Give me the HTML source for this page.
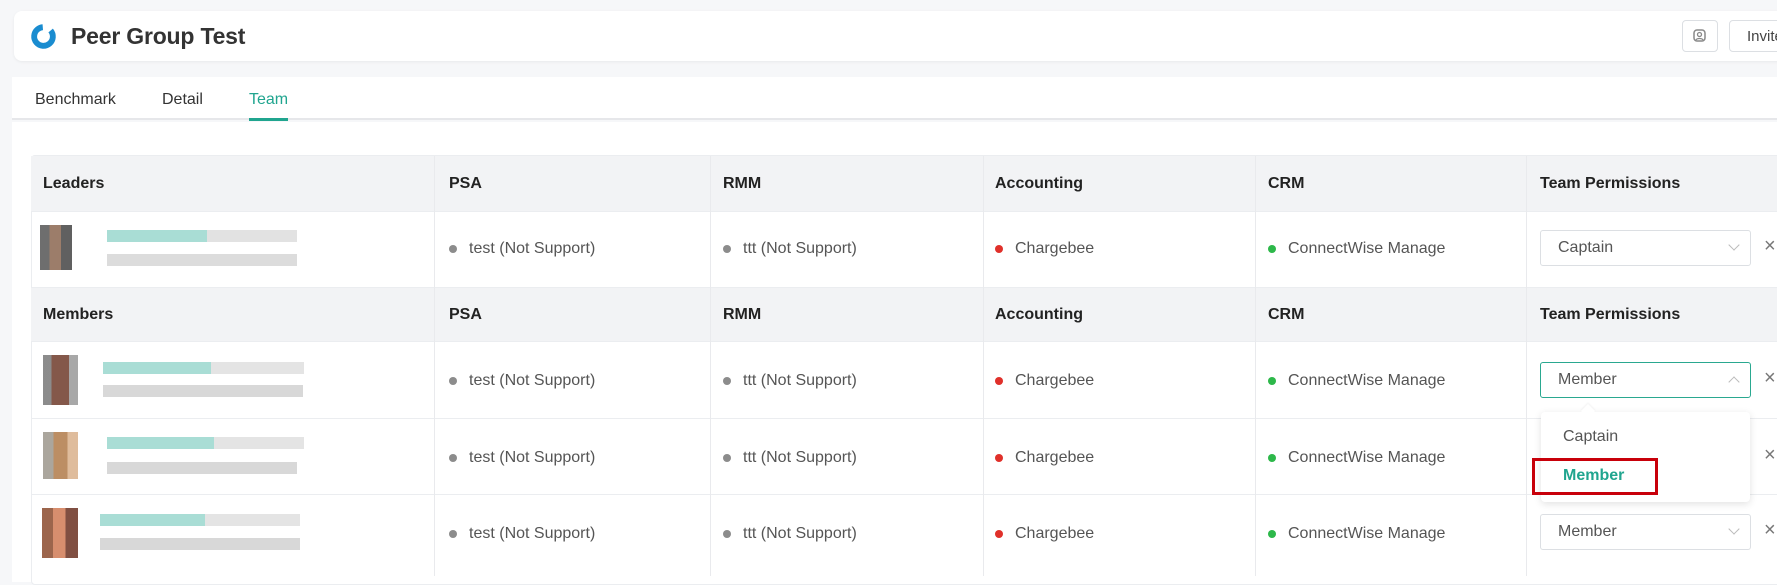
<!DOCTYPE html>
<html><head><meta charset="utf-8"><style>
*{box-sizing:border-box;margin:0;padding:0}
body{width:1777px;height:571px;overflow:hidden;background:#f6f7f9;font-family:"Liberation Sans",sans-serif;position:relative;color:#555}
.a{position:absolute}
.card{left:14px;top:11px;width:1800px;height:50px;background:#fff;border-radius:8px;box-shadow:0 1px 3px rgba(0,0,0,.06)}
.title{left:71px;top:23px;font-size:23px;color:#333;font-weight:bold;letter-spacing:-0.2px}
.tabs{left:12px;top:77px;width:1800px;height:43px;background:#fff;border-bottom:2px solid #e6e7ea}
.tab{top:91px;font-size:16px;color:#333}
.panel{left:12px;top:122px;width:1800px;height:460px;background:#fff}
.tbl{left:31px;top:155px;width:1760px;height:430px;border:1px solid #ebedf0;border-radius:4px;background:#fff}
.hd{left:31px;width:1760px;background:#f2f3f5}
.th{font-size:16px;font-weight:bold;color:#222}
.vl{width:1px;background:#e9eaed}
.hl{left:31px;width:1760px;height:1px;background:#ebedf0}
.td{font-size:16px;color:#555}
.dot{width:8px;height:8px;border-radius:50%}
.sel{left:1540px;width:211px;height:36px;border:1px solid #dcdfe3;border-radius:3px;background:#fff;font-size:16px;color:#555;padding:8px 0 0 17px}
.chev{right:12px;top:12px;width:8px;height:8px;border-right:1px solid #bbb;border-bottom:1px solid #bbb;transform:rotate(45deg)}
.x{left:1764px;font-size:20px;color:#777}
</style></head><body>
<div class="a card"></div>
<svg class="a" style="left:30px;top:23px" width="27" height="27" viewBox="0 0 24 24"><circle cx="12" cy="12" r="8.3" fill="none" stroke="#1a8cd0" stroke-width="5.2" stroke-dasharray="44 9" transform="rotate(-40 12 12)"/></svg>
<div class="a title">Peer Group Test</div>
<div class="a" style="left:1682px;top:20px;width:36px;height:32px;border:1px solid #dcdfe3;border-radius:4px;background:#fff"></div>
<svg class="a" style="left:1692px;top:28px" width="16" height="16" viewBox="0 0 16 16"><rect x="2" y="2" width="11" height="11" rx="3" fill="none" stroke="#888" stroke-width="1.5"/><circle cx="7.5" cy="6.5" r="2" fill="none" stroke="#888" stroke-width="1.3"/><path d="M4 12c1-2 6-2 7 0" stroke="#888" fill="none" stroke-width="1.3"/></svg>
<div class="a" style="left:1729px;top:20px;width:80px;height:32px;border:1px solid #dcdfe3;border-radius:4px;background:#fff;font-size:15px;color:#444;padding:7px 0 0 17px">Invite</div>

<div class="a tabs"></div>
<div class="a tab" style="left:35px">Benchmark</div>
<div class="a tab" style="left:162px">Detail</div>
<div class="a tab" style="left:249px;color:#20a58f">Team</div>
<div class="a" style="left:249px;top:118px;width:39px;height:3px;background:#20a58f"></div>

<div class="a panel"></div>
<div class="a tbl"></div>
<div class="a hd" style="top:156px;height:55px"></div>
<div class="a hd" style="top:287px;height:54px"></div>
<div class="a hl" style="top:211px"></div>
<div class="a hl" style="top:287px"></div>
<div class="a hl" style="top:341px"></div>
<div class="a hl" style="top:418px"></div>
<div class="a hl" style="top:494px"></div>
<div class="a vl" style="left:434px;top:156px;height:420px"></div>
<div class="a vl" style="left:710px;top:156px;height:420px"></div>
<div class="a vl" style="left:983px;top:156px;height:420px"></div>
<div class="a vl" style="left:1255px;top:156px;height:420px"></div>
<div class="a vl" style="left:1526px;top:156px;height:420px"></div>

<div class="a th" style="left:43px;top:175px">Leaders</div>
<div class="a th" style="left:449px;top:175px">PSA</div>
<div class="a th" style="left:723px;top:175px">RMM</div>
<div class="a th" style="left:995px;top:175px">Accounting</div>
<div class="a th" style="left:1268px;top:175px">CRM</div>
<div class="a th" style="left:1540px;top:175px">Team Permissions</div>
<div class="a th" style="left:43px;top:306px">Members</div>
<div class="a th" style="left:449px;top:306px">PSA</div>
<div class="a th" style="left:723px;top:306px">RMM</div>
<div class="a th" style="left:995px;top:306px">Accounting</div>
<div class="a th" style="left:1268px;top:306px">CRM</div>
<div class="a th" style="left:1540px;top:306px">Team Permissions</div>

<div class="a" style="left:40px;top:225px;width:32px;height:45px;background:linear-gradient(90deg,#555 0 30%,#8a6650 30% 65%,#444 65%);opacity:.85"></div>
<div class="a" style="left:107px;top:230px;width:100px;height:12px;background:#a9ddd5"></div>
<div class="a" style="left:207px;top:230px;width:90px;height:12px;background:#e2e2e2"></div>
<div class="a" style="left:107px;top:254px;width:190px;height:12px;background:#dcdcdc"></div>
<div class="a dot" style="left:449px;top:245px;background:#8c8c8c"></div><div class="a td" style="left:469px;top:240px">test (Not Support)</div>
<div class="a dot" style="left:723px;top:245px;background:#8c8c8c"></div><div class="a td" style="left:743px;top:240px">ttt (Not Support)</div>
<div class="a dot" style="left:995px;top:245px;background:#e0302a"></div><div class="a td" style="left:1015px;top:240px">Chargebee</div>
<div class="a dot" style="left:1268px;top:245px;background:#2db84a"></div><div class="a td" style="left:1288px;top:240px">ConnectWise Manage</div>
<div class="a sel" style="top:230px">Captain<div class="a chev" style="top:10px"></div></div>
<div class="a x" style="top:235px">×</div>

<div class="a" style="left:43px;top:355px;width:35px;height:50px;background:linear-gradient(90deg,#777 0 25%,#6e3b2a 25% 75%,#999 75%);opacity:.85"></div>
<div class="a" style="left:103px;top:362px;width:108px;height:12px;background:#a9ddd5"></div>
<div class="a" style="left:211px;top:362px;width:93px;height:12px;background:#e4e4e4"></div>
<div class="a" style="left:103px;top:385px;width:200px;height:12px;background:#d8d8d8"></div>
<div class="a dot" style="left:449px;top:377px;background:#8c8c8c"></div><div class="a td" style="left:469px;top:372px">test (Not Support)</div>
<div class="a dot" style="left:723px;top:377px;background:#8c8c8c"></div><div class="a td" style="left:743px;top:372px">ttt (Not Support)</div>
<div class="a dot" style="left:995px;top:377px;background:#e0302a"></div><div class="a td" style="left:1015px;top:372px">Chargebee</div>
<div class="a dot" style="left:1268px;top:377px;background:#2db84a"></div><div class="a td" style="left:1288px;top:372px">ConnectWise Manage</div>
<div class="a sel" style="top:362px;border-color:#2aa890">Member<div class="a chev" style="top:15px;transform:rotate(225deg)"></div></div>
<div class="a x" style="top:367px">×</div>

<div class="a" style="left:43px;top:432px;width:35px;height:47px;background:linear-gradient(90deg,#9c968c 0 30%,#b07a48 30% 70%,#d9b08a 70%);opacity:.85"></div>
<div class="a" style="left:107px;top:437px;width:107px;height:12px;background:#a9ddd5"></div>
<div class="a" style="left:214px;top:437px;width:90px;height:12px;background:#e4e4e4"></div>
<div class="a" style="left:107px;top:462px;width:190px;height:12px;background:#d8d8d8"></div>
<div class="a dot" style="left:449px;top:454px;background:#8c8c8c"></div><div class="a td" style="left:469px;top:449px">test (Not Support)</div>
<div class="a dot" style="left:723px;top:454px;background:#8c8c8c"></div><div class="a td" style="left:743px;top:449px">ttt (Not Support)</div>
<div class="a dot" style="left:995px;top:454px;background:#e0302a"></div><div class="a td" style="left:1015px;top:449px">Chargebee</div>
<div class="a dot" style="left:1268px;top:454px;background:#2db84a"></div><div class="a td" style="left:1288px;top:449px">ConnectWise Manage</div>
<div class="a x" style="top:444px">×</div>

<div class="a" style="left:42px;top:508px;width:36px;height:50px;background:linear-gradient(90deg,#8a4a2c 0 30%,#d07a55 30% 65%,#6a3020 65%);opacity:.85"></div>
<div class="a" style="left:100px;top:514px;width:105px;height:12px;background:#a9ddd5"></div>
<div class="a" style="left:205px;top:514px;width:95px;height:12px;background:#e4e4e4"></div>
<div class="a" style="left:100px;top:538px;width:200px;height:12px;background:#d8d8d8"></div>
<div class="a dot" style="left:449px;top:530px;background:#8c8c8c"></div><div class="a td" style="left:469px;top:525px">test (Not Support)</div>
<div class="a dot" style="left:723px;top:530px;background:#8c8c8c"></div><div class="a td" style="left:743px;top:525px">ttt (Not Support)</div>
<div class="a dot" style="left:995px;top:530px;background:#e0302a"></div><div class="a td" style="left:1015px;top:525px">Chargebee</div>
<div class="a dot" style="left:1268px;top:530px;background:#2db84a"></div><div class="a td" style="left:1288px;top:525px">ConnectWise Manage</div>
<div class="a sel" style="top:514px">Member<div class="a chev" style="top:10px"></div></div>
<div class="a x" style="top:519px">×</div>

<div class="a" style="left:1541px;top:412px;width:209px;height:90px;background:#fff;border-radius:4px;box-shadow:0 2px 8px rgba(0,0,0,.12)"></div>
<div class="a" style="left:1583px;top:406px;width:10px;height:10px;background:#fff;transform:rotate(45deg);box-shadow:-1px -1px 2px rgba(0,0,0,.05)"></div>
<div class="a" style="left:1563px;top:428px;font-size:16px;color:#555">Captain</div>
<div class="a" style="left:1563px;top:467px;font-size:16px;color:#20a58f;font-weight:bold">Member</div>
<div class="a" style="left:1532px;top:458px;width:126px;height:37px;border:3px solid #c8000a"></div>
</body></html>
